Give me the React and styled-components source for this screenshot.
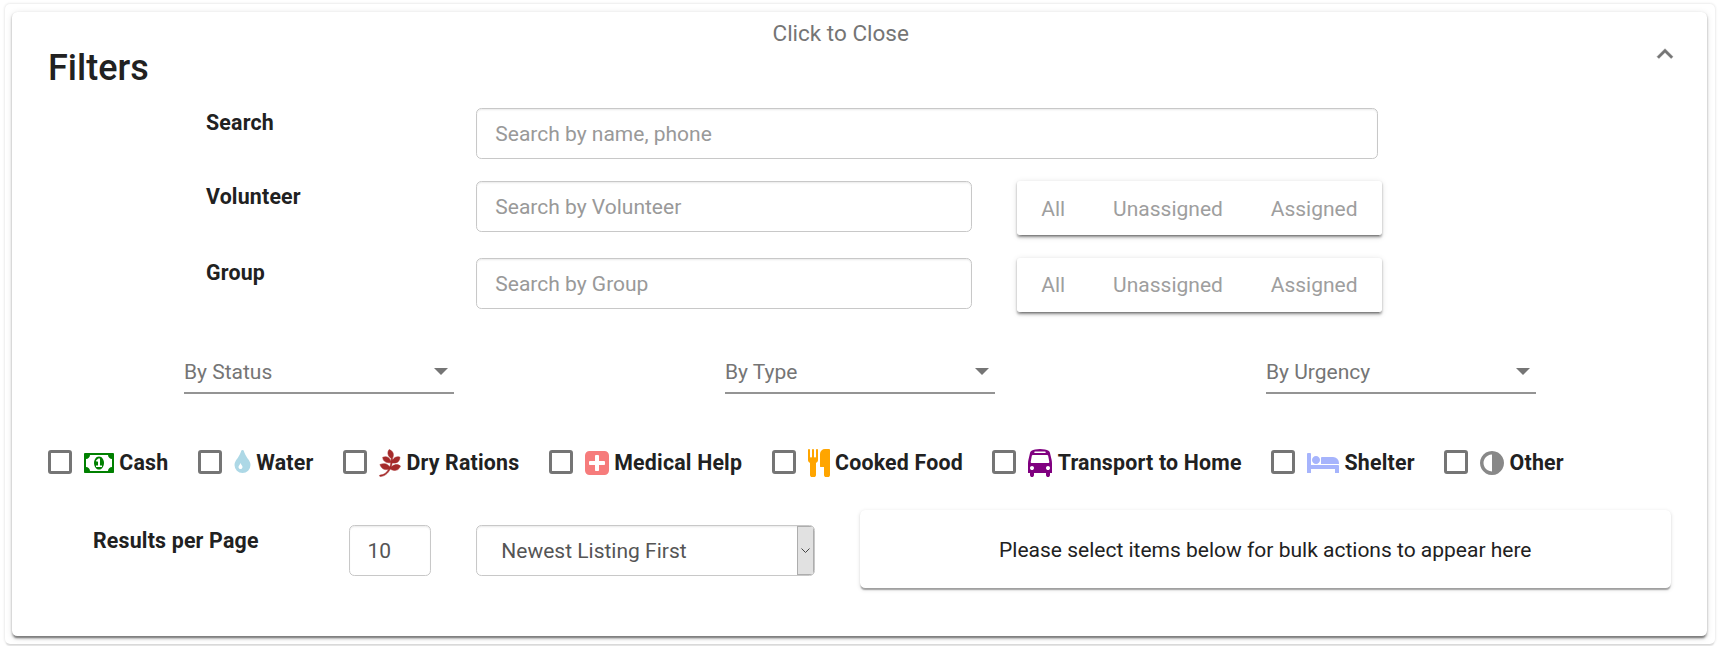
import React from "react";
import styled, { createGlobalStyle } from "styled-components";
import { FaPagelines } from "react-icons/fa";

const Global = createGlobalStyle`
  * { box-sizing: border-box; }
  body { margin: 0; background: #fff; font-family: Roboto, sans-serif; font-size: 21px; color: #212121; }
  #root { height: 646px; overflow: hidden; }
`;

const Page = styled.div`
  padding: 4px 8px 2.5px 5px;
  background: #fff;
  height: 646px;
`;
const Outer = styled.div`
  height: 639.5px;
  padding: 8px 8px 0 7px;
  border-radius: 5px;
  box-shadow: 0 2.67px 1.33px -1.33px rgba(0, 0, 0, 0.1), 0 0 3px rgba(0, 0, 0, 0.16);
`;
const Card = styled.main`
  height: 624px;
  padding: 0 36px;
  border-radius: 5.33px;
  background: #fff;
  box-shadow: 0 4px 1.33px -2.67px rgba(0, 0, 0, 0.2), 0 2.67px 2.67px 0 rgba(0, 0, 0, 0.14),
    0 1.33px 6.67px 0 rgba(0, 0, 0, 0.12), 0 1.33px 2px rgba(0, 0, 0, 0.22);
`;
const Header = styled.header`
  height: 96px;
  display: grid;
  grid-template-columns: 724.5px auto 1fr;
`;
const Title = styled.h1`
  margin: 0;
  padding-top: 34px;
  font-size: 36px;
  line-height: 44px;
  font-weight: 500;
`;
const CloseHint = styled.span`
  padding-top: 8px;
  font-size: 22.5px;
  line-height: 26px;
  color: #757575;
`;
const Chevron = styled.svg`
  justify-self: end;
  width: 32px;
  height: 32px;
  margin-top: 26.4px;
  margin-right: -10px;
  fill: #757575;
  stroke: #757575;
  stroke-width: 0.3;
`;
const FormRow = styled.div`
  display: flex;
  align-items: flex-start;
  height: ${(p) => p.$h}px;
  padding-left: 158px;
`;
const RowLabel = styled.label`
  width: ${(p) => p.$w || 270.3}px;
  padding-top: ${(p) => p.$top || 2}px;
  font-size: 21.33px;
  letter-spacing: 0.19px;
  line-height: 26px;
  font-weight: 700;
`;
const Field = styled.input`
  width: ${(p) => p.$w}px;
  height: 50.67px;
  padding: 1px ${(p) => p.$pad || 18}px 0;
  border: 1.33px solid #c8c8c8;
  border-radius: 5.33px;
  background: #fff;
  box-shadow: inset 0 1.33px 1.33px rgba(0, 0, 0, 0.075);
  font: inherit;
  color: #555;
  outline: none;
  &::placeholder { color: #999; opacity: 1; }
`;
const ButtonGroup = styled.div`
  display: flex;
  align-items: center;
  justify-content: space-between;
  width: 365px;
  height: 54px;
  margin-left: 45.5px;
  padding: ${(p) => p.$drop || 0}px 24.7px 0 24px;
  border-radius: 2.67px;
  background: #fff;
  box-shadow: 0 4px 1.33px -2.67px rgba(0, 0, 0, 0.2), 0 2.67px 2.67px rgba(0, 0, 0, 0.14),
    0 1.33px 6.67px rgba(0, 0, 0, 0.12), 0 1.33px 2px rgba(0, 0, 0, 0.2);
`;
const GroupButton = styled.button`
  padding: 0;
  border: 0;
  background: none;
  font: inherit;
  color: #9e9e9e;
`;
const Selects = styled.div`
  display: grid;
  grid-template-columns: repeat(3, 541px);
  justify-items: center;
  height: 99px;
  margin-top: 16px;
`;
const Select = styled.div`
  display: flex;
  align-items: center;
  justify-content: space-between;
  width: 270px;
  height: 44px;
  padding: 1px 6px 0 0.5px;
  border-bottom: 2px solid #949494;
  color: #757575;
`;
const Caret = styled.span`
  border: 7px solid transparent;
  border-top-color: #757575;
  border-bottom: 0;
`;
const Needs = styled.div`
  display: flex;
  gap: 29.57px;
  height: 61px;
`;
const Need = styled.label`
  display: flex;
  align-items: flex-start;
  font-size: 21.33px;
  letter-spacing: 0.2px;
  line-height: 26px;
  font-weight: 700;
  white-space: nowrap;
`;
const Box = styled.span`
  width: 24px;
  height: 24px;
  margin: 1px 12px 0 0;
  border: 3px solid #757575;
  border-radius: 3px;
`;
const NeedIcon = styled.span`
  width: ${(p) => p.$w}px;
  height: 28px;
  margin-right: 5.3px;
  color: ${(p) => p.$c};
  svg { display: block; width: ${(p) => p.$w}px; height: 28px; fill: currentColor; overflow: visible; }
`;
const Leaves = styled(FaPagelines)`
  stroke: currentColor;
  stroke-width: 10;
`;
const NeedText = styled.span`
  padding-top: 1px;
`;
const Bottom = styled.div`
  display: flex;
  align-items: flex-start;
  padding-left: 45px;
`;
const SortSelect = styled.div`
  display: flex;
  align-items: center;
  justify-content: space-between;
  width: 338.5px;
  height: 50.67px;
  margin: 15.3px 45.3px 0 45px;
  padding-left: 24.3px;
  border: 1.33px solid #c8c8c8;
  border-radius: 5.33px;
  overflow: hidden;
  color: #555;
  box-shadow: inset 0 1.33px 1.33px rgba(0, 0, 0, 0.075);
`;
const SortArrow = styled.span`
  display: flex;
  align-items: center;
  justify-content: center;
  width: 17px;
  height: 100%;
  border: 1px solid #adadad;
  background: #e1e1e1;
`;
const CountWrap = styled.div`
  padding-top: 15.3px;
`;
const BulkPanel = styled.section`
  display: flex;
  align-items: center;
  justify-content: center;
  width: 811px;
  height: 78px;
  padding-top: 2px;
  border-radius: 5.33px;
  box-shadow: 0 2.67px 1.33px -1.33px rgba(0, 0, 0, 0.2), 0 1.33px 1.33px rgba(0, 0, 0, 0.14),
    0 1.33px 4px rgba(0, 0, 0, 0.12);
`;

const needs = [
  { label: "Cash", w: 30, c: "green", vb: "0 0 1920 1792", d: "M768 1152h384v-96h-128v-448h-114l-148 137 77 80q42-37 55-57h2v288h-128v96zm512-256q0 70-21 142t-59.5 134-101.5 101-138 39-138-39-101.5-101-59.5-134-21-142 21-142 59.5-134 101.5-101 138-39 138 39 101.5 101 59.5 134 21 142zm512 256v-512q-106 0-181-75t-75-181h-1152q0 106-75 181t-181 75v512q106 0 181 75t75 181h1152q0-106 75-181t181-75zm128-832v1152q0 26-19 45t-45 19h-1792q-26 0-45-19t-19-45v-1152q0-26 19-45t45-19h1792q26 0 45 19t19 45z" },
  { label: "Water", w: 17, c: "lightblue", vb: "288 0 1088 1792", d: "M832 1152q0-36-20-69-1-1-15.5-22.5t-25.5-38-25-44-21-50.5q-4-16-21-16t-21 16q-7 23-21 50.5t-25 44-25.5 38-15.5 22.5q-20 33-20 69 0 53 37.5 90.5t90.5 37.5 90.5-37.5 37.5-90.5zm512-128q0 212-150 362t-362 150-362-150-150-362q0-145 81-275 6-9 62.5-90.5t101-151 99.5-178 83-201.5q9-30 34-47t51-17 51.5 17 33.5 47q28 93 83 201.5t99.5 178 101 151 62.5 90.5q81 127 81 275z" },
  { label: "Dry Rations", w: 22, c: "brown", Icon: Leaves },
  { label: "Medical Help", w: 24, c: "#f67c7c", vb: "128 0 1536 1792", d: "M1408 960v-128q0-26-19-45t-45-19h-320v-320q0-26-19-45t-45-19h-128q-26 0-45 19t-19 45v320h-320q-26 0-45 19t-19 45v128q0 26 19 45t45 19h320v320q0 26 19 45t45 19h128q26 0 45-19t19-45v-320h320q26 0 45-19t19-45zm256-544v960q0 119-84.5 203.5t-203.5 84.5h-960q-119 0-203.5-84.5t-84.5-203.5v-960q0-119 84.5-203.5t203.5-84.5h960q119 0 203.5 84.5t84.5 203.5z" },
  { label: "Cooked Food", w: 22, c: "orange", vb: "192 0 1408 1792", d: "M832 64v640q0 61-35.5 111t-92.5 70v779q0 52-38 90t-90 38h-128q-52 0-90-38t-38-90v-779q-57-20-92.5-70t-35.5-111v-640q0-26 19-45t45-19 45 19 19 45v416q0 26 19 45t45 19 45-19 19-45v-416q0-26 19-45t45-19 45 19 19 45v416q0 26 19 45t45 19 45-19 19-45v-416q0-26 19-45t45-19 45 19 19 45zm768 0v1600q0 52-38 90t-90 38h-128q-52 0-90-38t-38-90v-512h-224q-13 0-22.5-9.5t-9.5-22.5v-800q0-132 94-226t226-94h256q26 0 45 19t19 45z" },
  { label: "Transport to Home", w: 24, c: "purple", vb: "128 0 1536 1792", d: "M512 1216q0-53-37.5-90.5t-90.5-37.5-90.5 37.5-37.5 90.5 37.5 90.5 90.5 37.5 90.5-37.5 37.5-90.5zm1024 0q0-53-37.5-90.5t-90.5-37.5-90.5 37.5-37.5 90.5 37.5 90.5 90.5 37.5 90.5-37.5 37.5-90.5zm-46-396l-72-384q-5-23-22.5-37.5t-40.5-14.5h-918q-23 0-40.5 14.5t-22.5 37.5l-72 384q-5 30 14 53t49 23h1062q30 0 49-23t14-53zm-226-612q0-20-14-34t-34-14h-640q-20 0-34 14t-14 34 14 34 34 14h640q20 0 34-14t14-34zm400 725v603h-128v128q0 53-37.5 90.5t-90.5 37.5-90.5-37.5-37.5-90.5v-128h-768v128q0 53-37.5 90.5t-90.5 37.5-90.5-37.5-37.5-90.5v-128h-128v-603q0-112 25-223l103-454q9-78 97.5-137t230-89 312.5-30 312.5 30 230 89 97.5 137l105 454q23 102 23 223z" },
  { label: "Shelter", w: 32, c: "#a6b4fc", vb: "0 0 2048 1792", d: "M256 1024h1728q26 0 45 19t19 45v448h-256v-256h-1536v256h-256v-1216q0-26 19-45t45-19h128q26 0 45 19t19 45v704zm576-320q0-106-75-181t-181-75-181 75-75 181 75 181 181 75 181-75 75-181zm1216 256v-64q0-159-112.5-271.5t-271.5-112.5h-704q-26 0-45 19t-19 45v384h1152z" },
  { label: "Other", w: 24, c: "#888", vb: "128 0 1536 1792", d: "M896 1440v-1088q-148 0-273 73t-198 198-73 273 73 273 198 198 273 73zm768-544q0 209-103 385.5t-279.5 279.5-385.5 103-385.5-103-279.5-279.5-103-385.5 103-385.5 279.5-279.5 385.5-103 385.5 103 279.5 279.5 103 385.5z" },
];

function AssignFilter({ drop }) {
  return (
    <ButtonGroup $drop={drop}>
      <GroupButton>All</GroupButton>
      <GroupButton>Unassigned</GroupButton>
      <GroupButton>Assigned</GroupButton>
    </ButtonGroup>
  );
}

export default function App() {
  return (
    <Page>
      <Global />
      <Outer>
        <Card>
          <Header>
            <Title>Filters</Title>
            <CloseHint>Click to Close</CloseHint>
            <Chevron viewBox="0 0 24 24"><path d="M12 8l-6 6 1.41 1.41L12 10.83l4.59 4.58L18 14z" /></Chevron>
          </Header>
          <FormRow $h={73}>
            <RowLabel>Search</RowLabel>
            <Field $w={902} placeholder="Search by name, phone" />
          </FormRow>
          <FormRow $h={77}>
            <RowLabel $top={3}>Volunteer</RowLabel>
            <Field $w={495.5} placeholder="Search by Volunteer" />
            <AssignFilter drop={2} />
          </FormRow>
          <FormRow $h={76}>
            <RowLabel>Group</RowLabel>
            <Field $w={495.5} placeholder="Search by Group" />
            <AssignFilter />
          </FormRow>
          <Selects>
            {["By Status", "By Type", "By Urgency"].map((t) => (
              <Select key={t}>{t}<Caret /></Select>
            ))}
          </Selects>
          <Needs>
            {needs.map(({ label, w, c, vb, d, Icon }) => (
              <Need key={label}>
                <Box />
                <NeedIcon $w={w} $c={c}>
                  {Icon ? <Icon /> : <svg viewBox={vb}><path d={d} /></svg>}
                </NeedIcon>
                <NeedText>{label}</NeedText>
              </Need>
            ))}
          </Needs>
          <Bottom>
            <RowLabel $w={256} $top={18}>Results per Page</RowLabel>
            <CountWrap><Field $w={82} $pad={17.5} defaultValue="10" /></CountWrap>
            <SortSelect>
              Newest Listing First
              <SortArrow>
                <svg width="9" height="6" viewBox="0 0 9 6" fill="none" stroke="#444"><path d="M.5 .5l4 4 4-4" /></svg>
              </SortArrow>
            </SortSelect>
            <BulkPanel>Please select items below for bulk actions to appear here</BulkPanel>
          </Bottom>
        </Card>
      </Outer>
    </Page>
  );
}
